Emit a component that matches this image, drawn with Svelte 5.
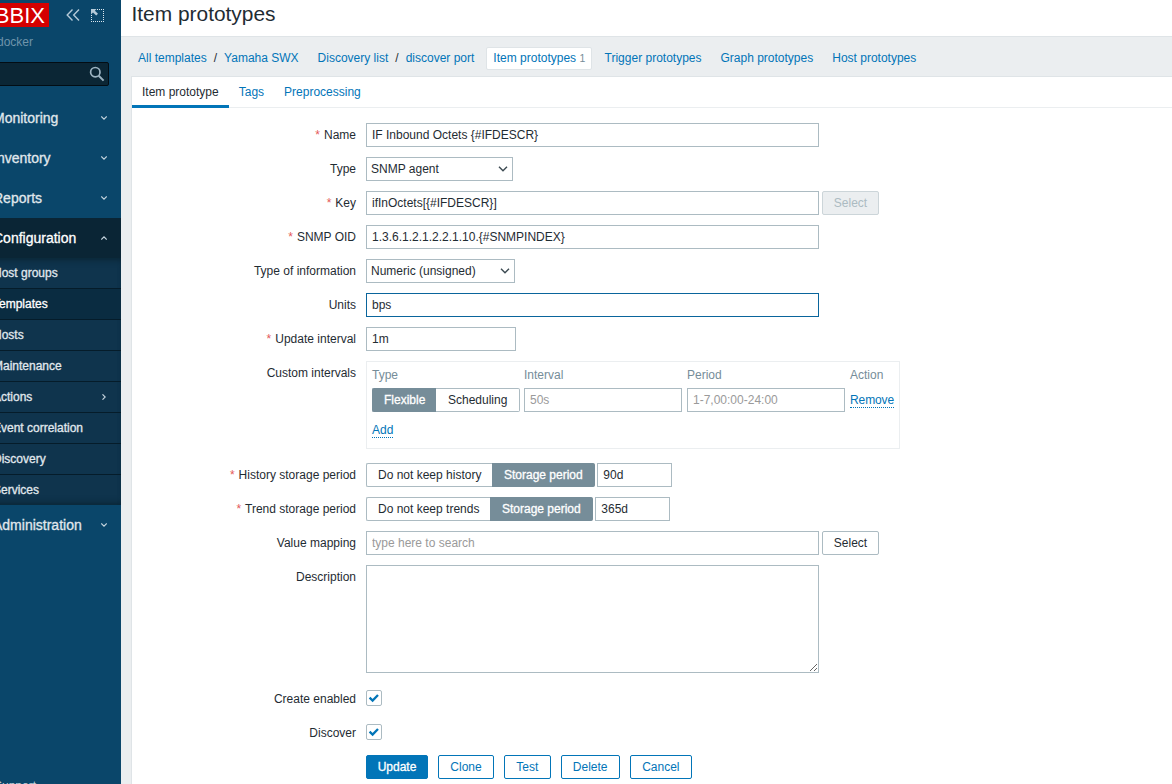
<script>
  let name = $state('IF Inbound Octets {#IFDESCR}');
  let key = $state('ifInOctets[{#IFDESCR}]');
  let oid = $state('1.3.6.1.2.1.2.2.1.10.{#SNMPINDEX}');
  let units = $state('bps');
  let updateInterval = $state('1m');
  let history = $state('90d');
  let trends = $state('365d');
  let intervalType = $state('Flexible');
  let historyMode = $state('Storage period');
  let trendMode = $state('Storage period');
  let createEnabled = $state(true);
  let discover = $state(true);

  const submenu = ['Host groups', 'Templates', 'Hosts', 'Maintenance', 'Actions', 'Event correlation', 'Discovery', 'Services'];
  const menu = [
    { label: 'Monitoring' },
    { label: 'Inventory' },
    { label: 'Reports' },
    { label: 'Configuration', items: submenu },
    { label: 'Administration' }
  ];
  const navLinks = ['Trigger prototypes', 'Graph prototypes', 'Host prototypes'];
  const buttons = ['Clone', 'Test', 'Delete', 'Cancel'];
</script>

{#snippet label(text, required = false)}
  <div class="label">{#if required}<span class="star">*</span>{/if}{text}</div>
{/snippet}

{#snippet segmented(options, value, pick)}
  <div class="segmented">
    {#each options as option}
      <button class:on={option === value} onclick={() => pick(option)}>{option}</button>
    {/each}
  </div>
{/snippet}

{#snippet checkbox(checked, toggle)}
  <button class="check" role="checkbox" aria-checked={checked} aria-label="toggle" onclick={toggle}>
    {#if checked}
      <svg width="14" height="14" viewBox="0 0 14 14"><path d="M2.6 6.7 5.6 9.6 11 4" fill="none" stroke="#0275b8" stroke-width="2.3" /></svg>
    {/if}
  </button>
{/snippet}

{#snippet selectBox(text)}
  <button class="select">
    <span>{text}</span>
    <svg width="10" height="6" viewBox="0 0 10 6"><path d="M1 .8 5 4.8 9 .8" fill="none" stroke="#3c4a52" stroke-width="1.4" /></svg>
  </button>
{/snippet}

<div class="page">
  <aside>
    <div class="brand">
      <div class="logo">ZABBIX</div>
      <svg class="collapse" width="14" height="12" viewBox="0 0 14 12"><path d="M6.5.6 1.2 6l5.3 5.4M13 .6 7.7 6 13 11.4" fill="none" stroke="#b5cad8" stroke-width="1.4" /></svg>
      <svg class="kiosk" width="13" height="13" viewBox="0 0 13 13">
        <path d="M6 .5H13M12.5 0V13M.5 6V13M0 12.5H13" fill="none" stroke="#dbe6ee" stroke-dasharray="1 1" />
        <path d="M0 0H5.5L3.9 1.7 7 4.8 5.2 6.4 2 3.4 0 5.4Z" fill="#b5cad8" />
      </svg>
    </div>
    <div class="server">docker</div>
    <div class="search">
      <svg width="16" height="16" viewBox="0 0 16 16"><circle cx="6.3" cy="6.2" r="4.7" fill="none" stroke="#9db4c2" stroke-width="1.7" /><path d="M9.7 9.7 14.6 14.6" stroke="#9db4c2" stroke-width="2" /></svg>
    </div>
    <nav>
      {#each menu as entry}
        <a href="#menu" class="main-item" class:open={entry.items}>
          <span>{entry.label}</span>
          <svg width="6" height="4" viewBox="0 0 6 4"><path d={entry.items ? 'M.3 3.5 3 .8 5.7 3.5' : 'M.3 .5 3 3.2 5.7 .5'} fill="none" stroke="#c5d4de" stroke-width="1.1" /></svg>
        </a>
        {#if entry.items}
          <div class="sub">
            {#each entry.items as item}
              <a href="#sub" class:selected={item === 'Templates'}>
                <span>{item}</span>
                {#if item === 'Actions'}
                  <svg width="4" height="6" viewBox="0 0 4 6"><path d="M.5 .3 3.2 3 .5 5.7" fill="none" stroke="#c5d4de" stroke-width="1.1" /></svg>
                {/if}
              </a>
            {/each}
          </div>
        {/if}
      {/each}
    </nav>
    <a href="#support" class="support">Support</a>
  </aside>

  <main>
    <header><h1>Item prototypes</h1></header>
    <div class="crumbs">
      <a href="#all">All templates</a><i>/</i><a href="#tpl">Yamaha SWX</a>
      <a href="#list" class="gap">Discovery list</a><i>/</i><a href="#port">discover port</a>
      <span class="current"><a href="#items">Item prototypes</a> <sup>1</sup></span>
      <span class="others">
        {#each navLinks as link}<a href="#nav">{link}</a>{/each}
      </span>
    </div>

    <section>
      <div class="tabs">
        <a href="#item" class="active">Item prototype</a>
        <a href="#tags">Tags</a>
        <a href="#pre">Preprocessing</a>
      </div>

      <div class="form">
        {@render label('Name', true)}
        <div class="field"><input class="wide" bind:value={name} /></div>

        {@render label('Type')}
        <div class="field type">{@render selectBox('SNMP agent')}</div>

        {@render label('Key', true)}
        <div class="field"><input class="wide" bind:value={key} /><button class="plain" disabled>Select</button></div>

        {@render label('SNMP OID', true)}
        <div class="field"><input class="wide" bind:value={oid} /></div>

        {@render label('Type of information')}
        <div class="field info">{@render selectBox('Numeric (unsigned)')}</div>

        {@render label('Units')}
        <div class="field"><input class="wide focused" bind:value={units} /></div>

        {@render label('Update interval', true)}
        <div class="field"><input class="mid" bind:value={updateInterval} /></div>

        {@render label('Custom intervals')}
        <div class="intervals">
          <span class="head">Type</span>
          <span class="head">Interval</span>
          <span class="head">Period</span>
          <span class="head">Action</span>
          {@render segmented(['Flexible', 'Scheduling'], intervalType, (v) => (intervalType = v))}
          <input placeholder="50s" />
          <input placeholder="1-7,00:00-24:00" />
          <div class="remove"><a href="#remove" class="dotted">Remove</a></div>
          <div class="add"><a href="#add" class="dotted">Add</a></div>
        </div>

        {@render label('History storage period', true)}
        <div class="field storage">
          {@render segmented(['Do not keep history', 'Storage period'], historyMode, (v) => (historyMode = v))}
          <input class="small" bind:value={history} />
        </div>

        {@render label('Trend storage period', true)}
        <div class="field storage">
          {@render segmented(['Do not keep trends', 'Storage period'], trendMode, (v) => (trendMode = v))}
          <input class="small" bind:value={trends} />
        </div>

        {@render label('Value mapping')}
        <div class="field"><input class="wide" placeholder="type here to search" /><button class="plain">Select</button></div>

        {@render label('Description')}
        <textarea></textarea>

        {@render label('Create enabled')}
        <div class="field">{@render checkbox(createEnabled, () => (createEnabled = !createEnabled))}</div>

        {@render label('Discover')}
        <div class="field">{@render checkbox(discover, () => (discover = !discover))}</div>

        <div class="actions">
          <button class="primary">Update</button>
          {#each buttons as text}<button>{text}</button>{/each}
        </div>
      </div>
    </section>
  </main>
</div>

<style>
  :global(body) { overflow: hidden; background: #ebeef0; }

  .page {
    display: flex;
    height: 784px;
    overflow: hidden;
    font: 12px/14px 'Liberation Sans', Arial, sans-serif;
    color: #1f2c33;
  }
  .page :global(*) { box-sizing: border-box; }
  a { color: #0275b8; text-decoration: none; }
  svg { display: block; flex: none; }
  button, input, textarea { font: inherit; color: inherit; margin: 0; }

  /* the menu is shifted left, its first pixels are out of view */
  aside { flex: none; width: 140px; margin-left: -19px; background: #0a466a; }
  .brand { display: flex; align-items: center; height: 27px; padding-top: 3px; }
  .logo {
    flex: none;
    display: flex;
    justify-content: flex-end;
    width: 68px;
    height: 24px;
    padding-right: 4px;
    overflow: hidden;
    background: #d40000;
    color: #fff;
    font-size: 22px;
    line-height: 25px;
  }
  .collapse { margin-left: 17px; }
  .kiosk { margin-left: 11px; }
  .server { margin: 8px 88px 0 0; color: #6f94aa; text-align: right; }
  .search {
    display: flex;
    justify-content: flex-end;
    align-items: center;
    height: 24px;
    margin: 13px 12px 12px;
    padding-right: 3px;
    background: #0b2635;
    border: 1px solid #030d14;
    border-radius: 2px;
  }
  .main-item, .sub a {
    display: flex;
    justify-content: space-between;
    align-items: center;
    padding: 0 14px 0 12px;
    color: #e0e8ed;
  }
  .main-item { height: 40px; font-size: 14px; -webkit-text-stroke: 0.3px; }
  .open { background: #0a2535; color: #fff; }
  .sub { background: #0f344d; box-shadow: inset 0 6px 6px -4px #0a2535, inset 0 -6px 6px -4px #0a2535; }
  .sub a { height: 31px; padding-right: 15px; padding-bottom: 1px; border-bottom: 1px solid #051c2a; -webkit-text-stroke: 0.3px; }
  .sub a:last-child { height: 30px; padding-bottom: 0; border: 0; }
  .sub .selected { background: #0a2c41; color: #fff; }
  .support { display: block; margin: 234px 0 0 13px; color: #c0d0da; }

  main { flex: none; width: 1080px; }
  header { height: 37px; background: #fff; border-bottom: 1px solid #dfe4e7; }
  h1 { margin: 0; padding: 2px 0 0 10.5px; font-size: 20.9px; font-weight: 400; line-height: 24px; }
  .crumbs { display: flex; align-items: center; height: 39px; padding: 3px 0 0 17px; }
  .crumbs i { width: 17.4px; text-align: center; font-style: normal; }
  .gap { margin-left: 19px; }
  .current {
    margin: 0 12.3px 0 12px;
    padding: 3px 6px 4px;
    background: #fff;
    border: 1px solid #dfe4e7;
    border-radius: 2px;
  }
  .current sup { font-size: 10.5px; line-height: 10px; color: #768d99; vertical-align: baseline; }
  .others { display: flex; gap: 19px; }

  section { height: 720px; margin-left: 10px; background: #fff; border: 1px solid #dfe4e7; }
  .tabs { display: flex; height: 31px; border-bottom: 1px solid #ebeef0; }
  .tabs a { height: 31px; padding: 8px 10px 0; }
  .tabs .active { color: #1f2c33; border-bottom: 3px solid #0275b8; }

  .form { display: grid; grid-template-columns: 224px 534px; column-gap: 10px; row-gap: 10px; padding-top: 15px; }
  .label { padding-top: 5px; text-align: right; white-space: nowrap; }
  textarea ~ .label { padding-top: 6px; }
  .star { margin-right: 4px; color: #e45959; }
  .field { display: flex; align-items: center; height: 24px; }
  input, textarea { border: 1px solid #acbbc2; background: #fff; outline: 0; }
  input { width: 158px; height: 24px; padding: 0 5px; }
  input::placeholder { color: #9a9a9a; opacity: 1; }
  .wide { width: 453px; }
  .focused { border-color: #0a659c; }
  .mid { width: 150px; }
  .small { width: 75px; }
  textarea { display: block; width: 453px; height: 108px; margin-bottom: 3px; }

  .select {
    display: flex;
    justify-content: space-between;
    align-items: center;
    height: 24px;
    padding: 0 4px;
    background: #fff;
    border: 1px solid #acbbc2;
  }
  .type .select { width: 147px; }
  .info .select { width: 149px; }
  .plain { width: 57px; height: 24px; margin-left: 3px; padding: 0; background: #fff; border: 1px solid #acbbc2; border-radius: 2px; }
  .plain:disabled { background: #ebeef0; border-color: #ccd5d9; color: #acbbc2; }

  .intervals {
    display: grid;
    grid-template-columns: 147px 158px 158px 1fr;
    column-gap: 5px;
    align-content: start;
    align-items: start;
    height: 88px;
    margin-bottom: 4px;
    padding: 6px 0 0 5px;
    border: 1px solid #ebeef0;
  }
  .head { height: 20px; color: #768d99; }
  .remove { padding-top: 5px; letter-spacing: -0.1px; }
  .add { grid-column: 1 / -1; padding-top: 11px; }
  .dotted { border-bottom: 1px dotted #0275b8; }

  .segmented { display: flex; width: max-content; height: 24px; }
  .segmented button { padding: 0 11.3px; background: #fff; border: 1px solid #acbbc2; white-space: nowrap; }
  .segmented button:first-child { padding: 0 11px; border-right: 0; border-radius: 2px 0 0 2px; }
  .segmented button:last-child { padding: 0 11.6px; border-left: 0; border-radius: 0 2px 2px 0; }
  .segmented .on { background: #768d99; border-color: #768d99; color: #fff; -webkit-text-stroke: 0.3px; }
  .storage { gap: 2px; }

  .check { display: block; width: 16px; height: 16px; padding: 0; background: #fff; border: 1px solid #acbbc2; border-radius: 2px; }
  .actions { grid-column: 2; display: flex; gap: 10px; padding-top: 1px; }
  .actions button { height: 24px; padding: 0 11.3px; background: #fff; border: 1px solid #0275b8; border-radius: 2px; color: #0275b8; }
  .actions .primary { width: 62px; padding: 0; background: #0275b8; color: #fff; -webkit-text-stroke: 0.3px; }
</style>
